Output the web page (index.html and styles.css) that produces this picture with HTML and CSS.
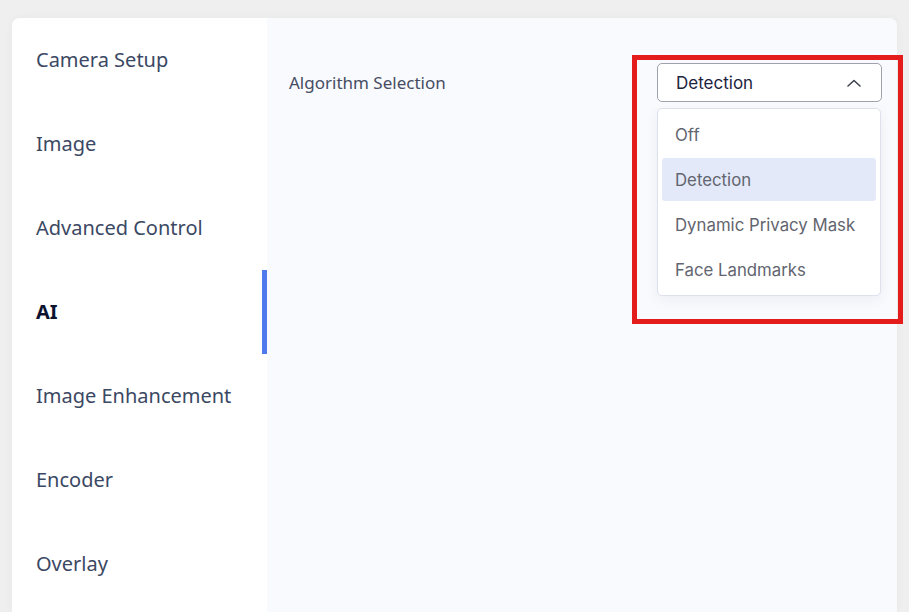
FILE: index.html
```html
<!DOCTYPE html>
<html lang="en">
<head>
<meta charset="utf-8">
<title>AI Settings</title>
<link rel="stylesheet" href="styles.css">
</head>
<body>
<div class="page">
  <div class="card">
    <nav class="sidebar">
      <div class="nav-item">Camera Setup</div>
      <div class="nav-item">Image</div>
      <div class="nav-item">Advanced Control</div>
      <div class="nav-item active">AI</div>
      <div class="nav-item">Image Enhancement</div>
      <div class="nav-item">Encoder</div>
      <div class="nav-item">Overlay</div>
    </nav>
    <main class="content">
      <div class="row">
        <div class="label">Algorithm Selection</div>
        <div class="select-wrap">
          <div class="select">
            <span class="select-value">Detection</span>
            <svg class="chevron" width="14" height="8" viewBox="0 0 14 8"><path d="M1 7 L7 1.5 L13 7" fill="none" stroke="#3a3f4b" stroke-width="1.5" stroke-linecap="round" stroke-linejoin="round"/></svg>
          </div>
          <ul class="menu">
            <li class="opt">Off</li>
            <li class="opt selected">Detection</li>
            <li class="opt">Dynamic Privacy Mask</li>
            <li class="opt">Face Landmarks</li>
          </ul>
          <div class="highlight"></div>
        </div>
      </div>
    </main>
  </div>
</div>
</body>
</html>
```
FILE: styles.css
```css
* { box-sizing: border-box; }
html, body { margin: 0; padding: 0; }
body {
  background: #efefef;
  width: 909px;
  height: 612px;
  overflow: hidden;
  font-family: "Noto Sans", "Open Sans", sans-serif;
}
.page {
  padding: 18px 12px 0 12px;
  height: 612px;
}
.card {
  display: flex;
  height: 594px;
  border-radius: 8px 8px 0 0;
  box-shadow: 0 0 8px rgba(0,0,0,0.04);
  background: #f9fafd;
}
.sidebar {
  width: 255px;
  background: #ffffff;
  display: flex;
  flex-direction: column;
  border-radius: 8px 0 0 0;
}
.nav-item {
  height: 84px;
  flex-shrink: 0;
  display: flex;
  align-items: center;
  padding-left: 24px;
  padding-bottom: 2px;
  font-size: 20px;
  color: #3b4863;
  position: relative;
}
.nav-item.active {
  font-weight: 700;
  color: #0d1330;
}
.nav-item.active::after {
  content: "";
  position: absolute;
  right: 0;
  top: 0;
  width: 5px;
  height: 84px;
  background: #4f79ec;
}
.content {
  flex: 1;
  background: #f9fafd;
  border-radius: 0 8px 0 0;
  padding: 45px 15px 0 22px;
}
.row {
  display: flex;
  justify-content: space-between;
  align-items: flex-start;
}
.label {
  font-size: 17px;
  color: #464d63;
  margin-top: 8px;
}
.select-wrap {
  width: 225px;
  position: relative;
}
.select {
  height: 39px;
  border: 1px solid #9fa2ad;
  border-radius: 5px;
  background: #fff;
  display: flex;
  align-items: center;
  justify-content: space-between;
  padding: 0 20px 0 18px;
}
.select-value {
  font-family: "Inter", "Roboto", sans-serif;
  font-size: 17px;
  color: #1c2440;
}
.chevron { display: block; }
.menu {
  list-style: none;
  margin: 6px 0 0 0;
  padding: 4px;
  width: 224px;
  background: #fff;
  border: 1px solid #dde1ec;
  border-radius: 5px;
  box-shadow: 0 4px 14px rgba(30,40,80,0.06);
}
.opt {
  height: 43px;
  margin-bottom: 2px;
  display: flex;
  align-items: center;
  padding-left: 13px;
  font-family: "Inter", "Roboto", sans-serif;
  font-size: 16.8px;
  color: #62656f;
  border-radius: 3px;
}
.opt:last-child { margin-bottom: 0; }
.opt.selected { background: #e3e9f9; }
.highlight {
  position: absolute;
  left: -25px;
  top: -8px;
  width: 271px;
  height: 269px;
  border: 5px solid #e41c1c;
  pointer-events: none;
}
```
